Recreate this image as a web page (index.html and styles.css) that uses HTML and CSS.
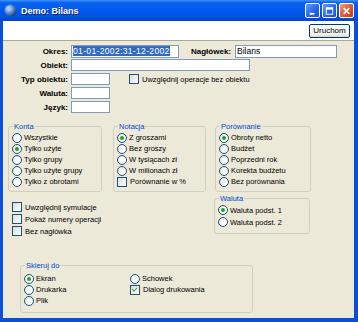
FILE: index.html
```html
<!DOCTYPE html>
<html lang="pl">
<head>
    <meta charset="UTF-8">
    <title>Demo: Bilans</title>
    <link rel="stylesheet" href="styles.css">
</head>
<body>
    <div class="window">
        <!-- Title bar -->
        <div class="titlebar">
            <svg class="app-icon" width="13" height="13" viewBox="0 0 13 13">
                <defs>
                    <radialGradient id="g" cx="35%" cy="35%" r="70%">
                        <stop offset="0" stop-color="#d8ecff"/>
                        <stop offset="0.5" stop-color="#5a8fd0"/>
                        <stop offset="1" stop-color="#1c3f7a"/>
                    </radialGradient>
                </defs>
                <circle cx="6.5" cy="6.5" r="6" fill="url(#g)"/>
                <path d="M3 5 Q6 3 9 5 Q7 7 4 8 Z" fill="#9bc0e8" opacity="0.7"/>
            </svg>
            <span class="title">Demo: Bilans</span>
            <div class="title-buttons">
                <span class="tbtn"><svg width="14" height="14" viewBox="0 0 14 14"><rect x="4" y="9" width="5" height="2" fill="#fff"/></svg></span>
                <span class="tbtn"><svg width="14" height="14" viewBox="0 0 14 14"><rect x="3.5" y="3.5" width="7" height="7" fill="none" stroke="#fff" stroke-width="1"/><rect x="3.5" y="3.5" width="7" height="2" fill="#fff"/></svg></span>
                <span class="tbtn close"><svg width="14" height="14" viewBox="0 0 14 14"><path d="M4 4 L10 10 M10 4 L4 10" stroke="#fff" stroke-width="1.8"/></svg></span>
            </div>
        </div>

        <!-- Toolbar -->
        <div class="toolbar">
            <button class="run-btn">Uruchom</button>
        </div>

        <div class="content">
            <!-- Header fields -->
            <div class="row">
                <label class="lbl">Okres:</label>
                <div class="input w-okres"><span class="sel">01-01-2002:31-12-2002</span></div>
                <label class="lbl lbl-inline">Nagłówek:</label>
                <div class="input w-naglowek">Bilans</div>
            </div>
            <div class="row">
                <label class="lbl">Obiekt:</label>
                <div class="input w-obiekt"></div>
            </div>
            <div class="row">
                <label class="lbl">Typ obiektu:</label>
                <div class="input w-small"></div>
                <span class="check row-check"><span class="box"></span>Uwzględnij operacje bez obiektu</span>
            </div>
            <div class="row">
                <label class="lbl">Waluta:</label>
                <div class="input w-small"></div>
            </div>
            <div class="row">
                <label class="lbl">Język:</label>
                <div class="input w-small"></div>
            </div>

            <!-- Option groups -->
            <div class="groups">
                <fieldset class="group g-konta">
                    <legend>Konta</legend>
                    <span class="radio"><span class="dot"></span>Wszystkie</span>
                    <span class="radio on"><span class="dot"></span>Tylko użyte</span>
                    <span class="radio"><span class="dot"></span>Tylko grupy</span>
                    <span class="radio"><span class="dot"></span>Tylko użyte grupy</span>
                    <span class="radio"><span class="dot"></span>Tylko z obrotami</span>
                </fieldset>
                <fieldset class="group g-notacja">
                    <legend>Notacja</legend>
                    <span class="radio on"><span class="dot"></span>Z groszami</span>
                    <span class="radio"><span class="dot"></span>Bez groszy</span>
                    <span class="radio"><span class="dot"></span>W tysiącach zł</span>
                    <span class="radio"><span class="dot"></span>W milionach zł</span>
                    <span class="check"><span class="box"></span>Porównanie w %</span>
                </fieldset>
                <fieldset class="group g-porownanie">
                    <legend>Porównanie</legend>
                    <span class="radio on"><span class="dot"></span>Obroty netto</span>
                    <span class="radio"><span class="dot"></span>Budżet</span>
                    <span class="radio"><span class="dot"></span>Poprzedni rok</span>
                    <span class="radio"><span class="dot"></span>Korekta budżetu</span>
                    <span class="radio"><span class="dot"></span>Bez porównania</span>
                </fieldset>
            </div>

            <div class="lower">
                <div class="checks">
                    <span class="check tall"><span class="box"></span>Uwzględnij symulacje</span>
                    <span class="check tall"><span class="box"></span>Pokaż numery operacji</span>
                    <span class="check tall"><span class="box"></span>Bez nagłówka</span>
                </div>
                <fieldset class="group g-waluta">
                    <legend>Waluta</legend>
                    <span class="radio tall on"><span class="dot"></span>Waluta podst. 1</span>
                    <span class="radio tall"><span class="dot"></span>Waluta podst. 2</span>
                </fieldset>
            </div>

            <fieldset class="group g-skieruj">
                <legend>Skieruj do</legend>
                <div class="cols">
                    <div class="col">
                        <span class="radio on"><span class="dot"></span>Ekran</span>
                        <span class="radio"><span class="dot"></span>Drukarka</span>
                        <span class="radio"><span class="dot"></span>Plik</span>
                    </div>
                    <div class="col">
                        <span class="radio"><span class="dot"></span>Schowek</span>
                        <span class="check checked"><span class="box"></span>Dialog drukowania</span>
                    </div>
                </div>
            </fieldset>
        </div>
    </div>
</body>
</html>
```

FILE: styles.css
```css
* {
    box-sizing: border-box;
    margin: 0;
    padding: 0;
}
body {
    font-family: "Liberation Sans", Arial, sans-serif;
    font-size: 7.5px;
    color: #000;
    background: #0a4fd8;
}
.window {
    width: 358px;
    height: 322px;
    background: #0a4fd8;
    padding: 0 4px 4px 3px;
    display: flex;
    flex-direction: column;
    overflow: hidden;
}

/* Title bar */
.titlebar {
    height: 21px;
    margin: 0 -4px 0 -3px;
    padding: 0 4px 0 4px;
    display: flex;
    align-items: center;
    background: linear-gradient(to bottom, #3d95ff 0%, #0a62f0 12%, #0058ee 50%, #0052e0 80%, #0046c8 100%);
}
.app-icon {
    margin-right: 4px;
}
.title {
    color: #fff;
    font-weight: bold;
    font-size: 9px;
    text-shadow: 1px 1px 0 #0a1f6a;
    flex: 1;
}
.title-buttons {
    display: flex;
    gap: 2px;
}
.tbtn {
    width: 15px;
    height: 15px;
    border: 1px solid #fff;
    border-radius: 2px;
    background: linear-gradient(135deg, #5f9bfc, #2a63e8 60%, #1c4fd0);
    display: flex;
    align-items: center;
    justify-content: center;
}
.tbtn.close {
    background: linear-gradient(135deg, #f0a080, #e2532e 55%, #c8381a);
}

/* Toolbar */
.toolbar {
    height: 20px;
    background: #fff;
    border-bottom: 1px solid #aca899;
    display: flex;
    justify-content: flex-end;
    align-items: center;
    padding-right: 4px;
}
.run-btn {
    font-family: "Liberation Sans", Arial, sans-serif;
    font-size: 8px;
    height: 14px;
    width: 41px;
    border: 1px solid #003c74;
    border-radius: 2px;
    background: linear-gradient(to bottom, #fff, #f0f0ea 80%, #d6d0c5);
    color: #000;
}

/* Form */
.content {
    flex: 1;
    background: #ece9d8;
    padding-top: 4px;
}
.row {
    display: flex;
    align-items: center;
    height: 12px;
    margin-bottom: 2px;
}
.lbl {
    width: 65px;
    text-align: right;
    font-weight: bold;
    font-size: 8px;
    margin-right: 3px;
}
.lbl-inline {
    width: auto;
    margin-left: 12px;
    margin-right: 4px;
}
.input {
    height: 12px;
    background: #fff;
    border: 1px solid #7f9db9;
    font-size: 8.5px;
    line-height: 10px;
    padding-left: 1px;
    white-space: nowrap;
    overflow: hidden;
}
.row:first-child .input {
    height: 13px;
}
.sel {
    background: #316ac5;
    color: #fff;
    letter-spacing: 0.35px;
}
.w-okres { width: 108px; }
.w-naglowek { width: 102px; }
.w-obiekt { width: 179px; }
.w-small { width: 39px; }
.row-check {
    margin-left: 19px;
}

/* Radios and checkboxes */
.radio, .check {
    display: flex;
    align-items: center;
    height: 11px;
    white-space: nowrap;
}
.tall {
    height: 12px;
}
.dot {
    width: 10px;
    height: 10px;
    border: 1px solid #1c5180;
    border-radius: 50%;
    background: radial-gradient(circle at 60% 60%, #fff 30%, #dcdcd6);
    margin-right: 2px;
    display: flex;
    align-items: center;
    justify-content: center;
}
.radio.on .dot::after {
    content: "";
    width: 4px;
    height: 4px;
    border-radius: 50%;
    background: #21a121;
}
.box {
    width: 10px;
    height: 10px;
    border: 1px solid #1c5180;
    background: linear-gradient(135deg, #dcdcd6, #fff);
    margin-right: 3px;
    display: flex;
    align-items: center;
    justify-content: center;
}
.check.checked .box::after {
    content: "";
    width: 4px;
    height: 2px;
    border-left: 1.5px solid #21a121;
    border-bottom: 1.5px solid #21a121;
    transform: rotate(-45deg) translate(0, -1px);
}

/* Group boxes */
.group {
    border: 1px solid #d0d0bf;
    border-radius: 3px;
    padding: 1px 3px 4px 3px;
}
.group legend {
    color: #0046d5;
    padding: 0 1px;
    margin-left: 1px;
    line-height: 9px;
}
.groups {
    display: flex;
    margin: 9px 0 0 5px;
}
.g-konta { width: 94px; }
.g-notacja { width: 93px; margin-left: 11px; }
.g-porownanie { width: 96px; margin-left: 9px; }

.lower {
    display: flex;
    align-items: flex-start;
}
.checks {
    margin: 9px 0 0 9px;
    width: 202px;
}
.g-waluta {
    width: 96px;
    margin-top: 2px;
    padding-bottom: 5px;
}

.g-skieruj {
    width: 233px;
    margin: 24px 0 0 17px;
    padding-bottom: 6px;
}
.cols {
    display: flex;
    padding-top: 2px;
}
.col {
    width: 106px;
}
```
